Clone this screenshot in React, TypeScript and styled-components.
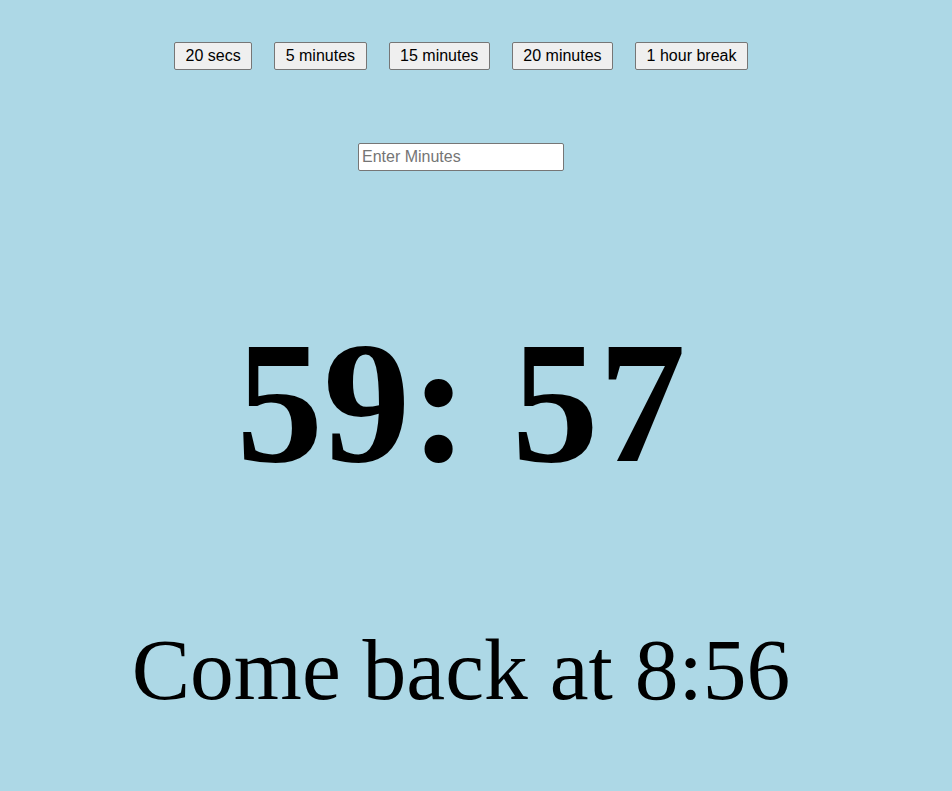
import React from "react";
import styled, { createGlobalStyle } from "styled-components";

const Global = createGlobalStyle`
  html, body { margin: 0; padding: 0; background: #add8e6; }
  body { font-family: "Liberation Serif", "Times New Roman", serif; }
`;

const Page = styled.div`
  width: 922px;
  min-height: 791px;
  display: flex;
  flex-direction: column;
  align-items: center;
  padding-top: 42px;
  box-sizing: border-box;
`;

const Toolbar = styled.div`
  display: flex;
  gap: 22px;
`;

const PresetButton = styled.button`
  font-family: "Liberation Sans", Arial, sans-serif;
  font-size: 16px;
  line-height: 18px;
  height: 28px;
  padding: 4px 10.5px;
  background: #efefef;
  color: #000;
  border: 1px solid #767676;
  border-radius: 2px;
  box-sizing: border-box;
`;

const MinutesInput = styled.input`
  margin-top: 73px;
  width: 206px;
  height: 28px;
  box-sizing: border-box;
  font-family: "Liberation Sans", Arial, sans-serif;
  font-size: 16px;
  padding: 1px 3px;
  border: 1px solid #767676;
  border-radius: 2px;
  background: #fff;
  &::placeholder { color: #757575; }
`;

const Timer = styled.div`
  margin-top: 145px;
  font-family: "Liberation Serif", "Times New Roman", serif;
  font-weight: bold;
  font-size: 174px;
  line-height: 1;
  color: #000;
  white-space: pre;
`;

const ComeBack = styled.div`
  margin-top: 136px;
  font-family: "Liberation Serif", "Times New Roman", serif;
  font-size: 87.5px;
  line-height: 1;
  color: #000;
`;

const presets = ["20 secs", "5 minutes", "15 minutes", "20 minutes", "1 hour break"];

export default function App() {
  return (
    <>
      <Global />
      <Page>
        <Toolbar>
          {presets.map((p) => (
            <PresetButton key={p}>{p}</PresetButton>
          ))}
        </Toolbar>
        <MinutesInput placeholder="Enter Minutes" />
        <Timer>59: 57</Timer>
        <ComeBack>Come back at 8:56</ComeBack>
      </Page>
    </>
  );
}
